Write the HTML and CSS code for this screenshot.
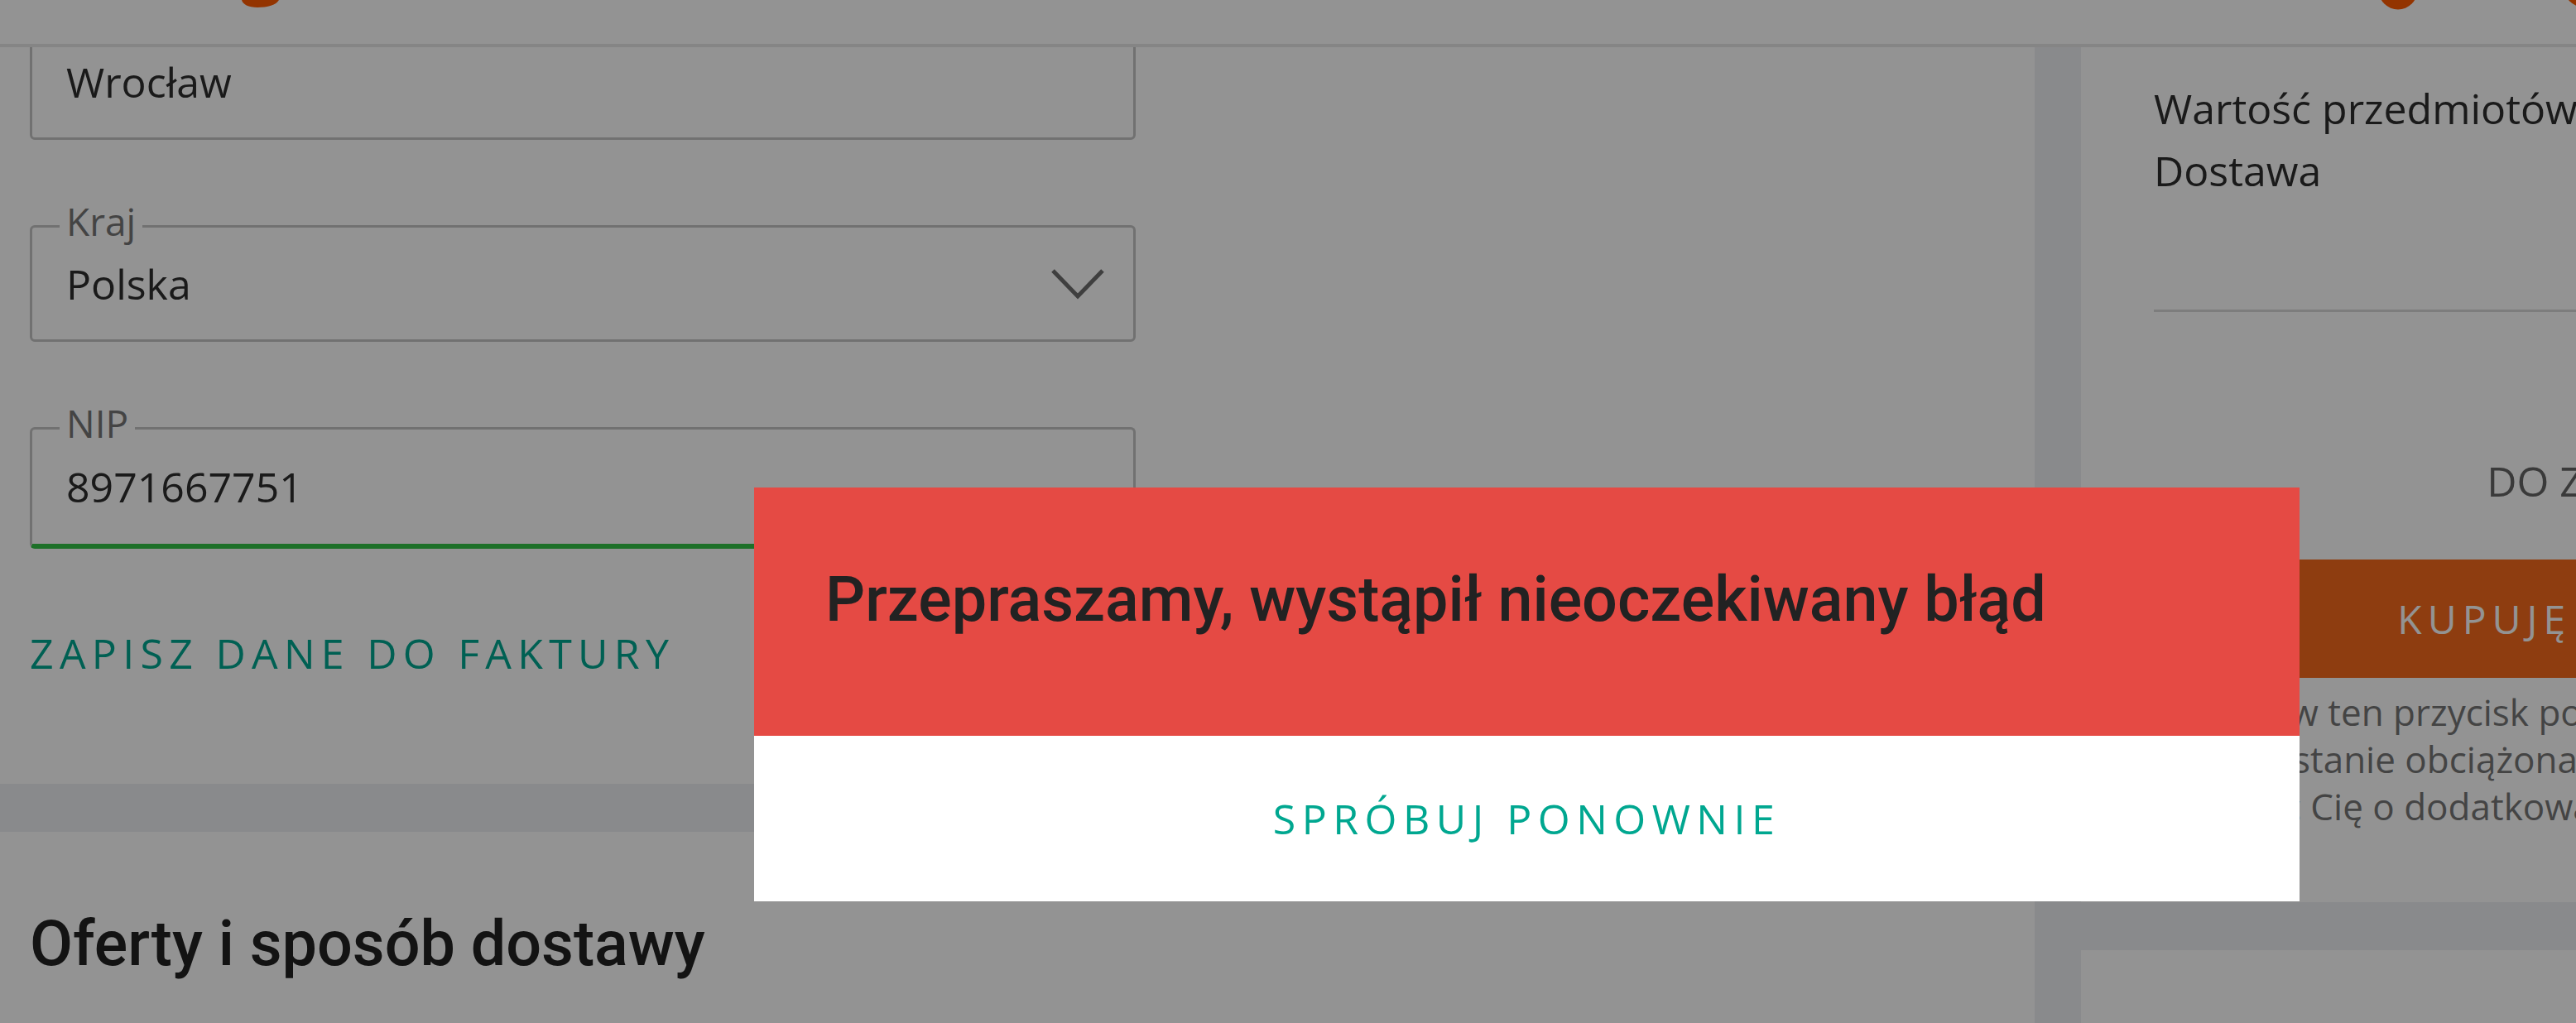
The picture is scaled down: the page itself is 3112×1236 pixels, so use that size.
FILE: index.html
```html
<!DOCTYPE html>
<html lang="pl">
<head>
<meta charset="utf-8">
<title>Allegro – podsumowanie zamówienia</title>
<link rel="stylesheet" href="styles.css">
</head>
<body>
<header class="topbar">
  <svg class="logo-tail" width="46" height="9" viewBox="0 0 46 9" aria-hidden="true"><path d="M0 0C1 5 8 9 19 9C31 9 42 6 45 0Z" fill="#ff5a00"/></svg>
  <svg class="icon-dot icon-dot--a" width="48" height="12" viewBox="0 0 48 12" aria-hidden="true"><circle cx="24" cy="-12" r="23.5" fill="#ff5a00"/></svg>
  <svg class="icon-dot icon-dot--b" width="48" height="12" viewBox="0 0 48 12" aria-hidden="true"><circle cx="24" cy="-15" r="23.5" fill="#ff5a00"/></svg>
</header>

<main class="page">
  <div class="col col--main">
    <section class="card card--form">
      <div class="field"><span class="field__value">Wrocław</span></div>
      <div class="field">
        <span class="field__label">Kraj</span>
        <span class="field__value">Polska</span>
        <svg class="chevron" width="66" height="38" viewBox="0 0 66 38" aria-hidden="true"><polyline points="3,3 33,34 63,3" fill="none" stroke="#6e6e6e" stroke-width="5"/></svg>
      </div>
      <div class="field field--valid">
        <span class="field__label">NIP</span>
        <span class="field__value">8971667751</span>
      </div>
      <a class="link-btn" href="#">Zapisz dane do faktury</a>
    </section>
    <section class="card card--offers">
      <h2 class="section-title">Oferty i sposób dostawy</h2>
    </section>
  </div>

  <aside class="col col--side">
    <section class="card card--summary">
      <div class="sum-row"><span>Wartość przedmiotów</span><span>1 299,00 zł</span></div>
      <div class="sum-row"><span>Dostawa</span><span>0,00 zł</span></div>
      <hr class="sum-divider">
      <p class="sum-total">DO ZAPŁATY</p>
      <button class="buy-btn" type="button">Kupuję i płacę</button>
      <p class="legal">Klikając w ten przycisk potwierdzasz zakup i akceptujesz regulamin.<br>Karta zostanie obciążona kwotą zamówienia, a bank może<br>poprosić Cię o dodatkową autoryzację płatności.</p>
    </section>
    <section class="card card--side-next"></section>
  </aside>
</main>

<div class="overlay"></div>
<div class="dialog" role="alertdialog">
  <div class="dialog__head">
    <h1 class="dialog__title">Przepraszamy, wystąpił nieoczekiwany błąd</h1>
  </div>
  <div class="dialog__actions">
    <button class="dialog__retry" type="button">Spróbuj ponownie</button>
  </div>
</div>
</body>
</html>
```

FILE: styles.css
```css
html, body {
  margin: 0;
  height: 100%;
  overflow: hidden;
}

body {
  background: #eef0f3;
  font-family: "Open Sans", "Noto Sans", sans-serif;
  color: #333;
}

/* header */
.topbar {
  position: fixed;
  top: 0;
  left: 0;
  right: 0;
  height: 53px;
  border-bottom: 4px solid #e7e7e7;
  background: #fff;
  display: flex;
  align-items: flex-start;
  overflow: hidden;
  z-index: 10;
}

.logo-tail { flex: none; margin-left: 292px; }
.icon-dot { flex: none; }
.icon-dot--a { margin-left: 2535px; }
.icon-dot--b { margin-left: 176px; }

/* page layout */
.page {
  display: flex;
  align-items: flex-start;
  gap: 56px;
  width: max-content;
}

.col {
  display: flex;
  flex-direction: column;
  gap: 58px;
}

.col--main { width: 2458px; }
.col--side { width: 1272px; }

.card { background: #fff; }

/* form card */
.card--form { padding: 28px 36px 124px; }

.field {
  position: relative;
  box-sizing: border-box;
  width: 1336px;
  height: 141px;
  border: 3px solid #c4c4c4;
  border-radius: 6px;
  display: flex;
  align-items: center;
  justify-content: space-between;
  padding: 0 34px 0 41px;
}

.field + .field { margin-top: 103px; }

.field--valid {
  height: 147px;
  border-bottom: 6px solid #33c346;
}

.field__label {
  position: absolute;
  left: 33px;
  top: -31px;
  padding: 0 8px;
  background: #fff;
  font-size: 46px;
  line-height: 46px;
  color: #777;
}

.field__value {
  font-size: 50px;
  line-height: 68px;
  color: #2e2e2e;
}

.chevron { flex: none; }

.link-btn {
  display: block;
  margin-top: 92px;
  font-size: 50px;
  line-height: 68px;
  letter-spacing: 7.3px;
  text-transform: uppercase;
  color: #00a790;
  text-decoration: none;
}

/* offers */
.card--offers {
  padding: 90px 36px 0;
  min-height: 400px;
}

.section-title {
  margin: 0;
  font-family: Roboto, "Noto Sans", sans-serif;
  font-weight: 500;
  font-size: 75.5px;
  line-height: 90px;
  color: #222;
}

/* summary */
.card--summary { padding: 94px 88px 87px; }

.sum-row {
  display: flex;
  justify-content: space-between;
  font-size: 50px;
  line-height: 75px;
  color: #2e2e2e;
}

.sum-divider {
  margin: 130px 0 0;
  height: 0;
  border: 0;
  border-top: 3px solid #d9d9d9;
}

.sum-total {
  margin: 170px 0 0;
  text-align: center;
  font-size: 50px;
  line-height: 68px;
  color: #666;
}

.buy-btn {
  display: flex;
  align-items: center;
  justify-content: center;
  box-sizing: border-box;
  width: 100%;
  height: 143px;
  margin-top: 61px;
  padding: 0 62px 0 0;
  border: 0;
  background: #f76a1c;
  color: #fff;
  font-family: inherit;
  font-size: 48px;
  letter-spacing: 7px;
  text-transform: uppercase;
}

.legal {
  margin: 13px 0 0;
  font-size: 44px;
  line-height: 57px;
  color: #777;
  white-space: nowrap;
}

.card--side-next { min-height: 400px; }

/* modal */
.overlay {
  position: fixed;
  inset: 0;
  background: rgba(0, 0, 0, 0.425);
  z-index: 20;
}

.dialog {
  position: fixed;
  left: 911px;
  top: 589px;
  width: 1867px;
  z-index: 30;
}

.dialog__head {
  background: #e54a44;
  padding: 90px 82px 120px 86px;
}

.dialog__title {
  margin: 0;
  font-family: Roboto, "Noto Sans", sans-serif;
  font-weight: 500;
  font-size: 75.5px;
  line-height: 90px;
  color: #222;
}

.dialog__actions {
  background: #fff;
  height: 200px;
  display: flex;
  align-items: center;
  justify-content: center;
}

.dialog__retry {
  padding: 0;
  border: 0;
  background: none;
  font-family: "Open Sans", "Noto Sans", sans-serif;
  font-size: 50px;
  letter-spacing: 7.5px;
  text-transform: uppercase;
  color: #00a790;
}
```
